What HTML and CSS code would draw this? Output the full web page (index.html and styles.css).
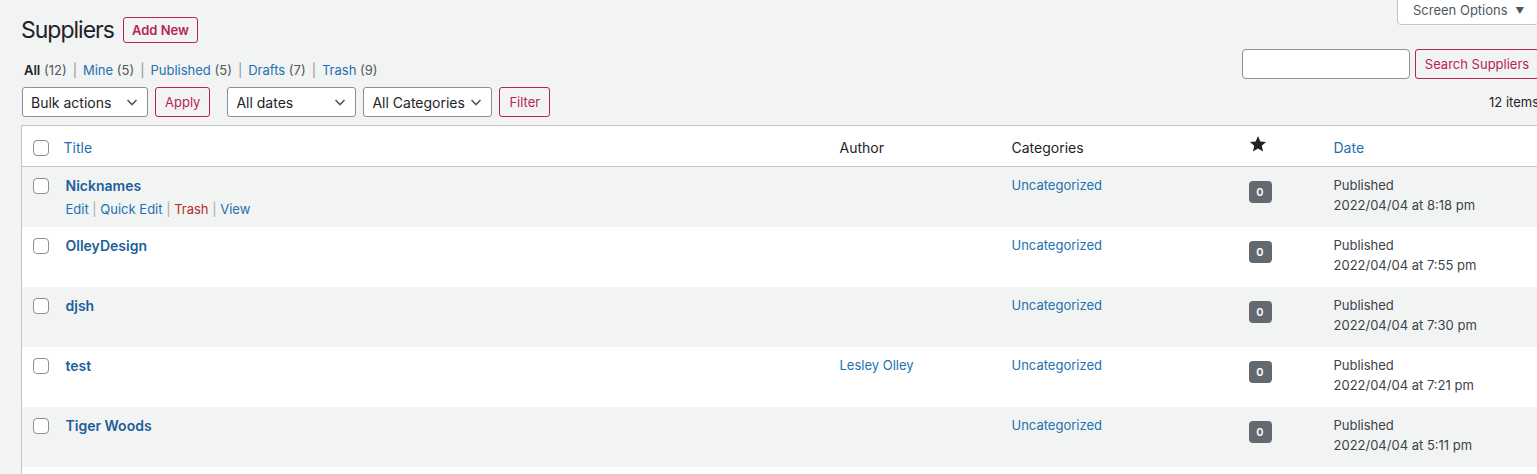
FILE: index.html
```html
<!DOCTYPE html>
<html lang="en">
<head>
  <meta charset="UTF-8">
  <title>Suppliers</title>
  <meta name="viewport" content="width=device-width,initial-scale=1">
  <link rel="stylesheet" href="styles.css">
</head>
<body>
<div class="wrap">

  <div class="head-row">
    <div class="head-title">
      <h1>Suppliers</h1>
      <a class="btn btn-small" href="#">Add New</a>
    </div>
    <button class="screen-options">Screen Options <span class="caret">&#9660;</span></button>
  </div>

  <div class="views-row">
    <ul class="subsubsub">
      <li><b>All</b> <span class="count">(12)</span></li>
      <li><a href="#">Mine</a> <span class="count">(5)</span></li>
      <li><a href="#">Published</a> <span class="count">(5)</span></li>
      <li><a href="#">Drafts</a> <span class="count">(7)</span></li>
      <li><a href="#">Trash</a> <span class="count">(9)</span></li>
    </ul>
    <div class="search-box">
      <input type="search" class="search-input">
      <button class="btn">Search Suppliers</button>
    </div>
  </div>

  <div class="tablenav">
    <div class="actions">
      <span class="select w-bulk">
        <select><option>Bulk actions</option></select>
        <svg viewBox="0 0 16 16"><path d="M3.5 6l4.5 4.5L12.5 6"/></svg>
      </span>
      <button class="btn">Apply</button>
    </div>
    <div class="actions">
      <span class="select w-filter">
        <select><option>All dates</option></select>
        <svg viewBox="0 0 16 16"><path d="M3.5 6l4.5 4.5L12.5 6"/></svg>
      </span>
      <span class="select w-filter">
        <select><option>All Categories</option></select>
        <svg viewBox="0 0 16 16"><path d="M3.5 6l4.5 4.5L12.5 6"/></svg>
      </span>
      <button class="btn">Filter</button>
    </div>
    <span class="displaying-num">12 items</span>
  </div>

  <table class="list-table">
    <colgroup>
      <col class="c-check"><col><col class="c-author"><col class="c-cats"><col class="c-star"><col class="c-date">
    </colgroup>
    <thead>
      <tr>
        <th class="check-column"><input type="checkbox"></th>
        <th><a href="#">Title</a></th>
        <th>Author</th>
        <th>Categories</th>
        <th class="star-col">
          <svg class="star" viewBox="0 0 20 20"><path d="M10 1.2l2.6 5.9 6.4.6-4.8 4.3 1.4 6.3L10 15l-5.6 3.3 1.4-6.3L1 7.7l6.4-.6z"/></svg>
        </th>
        <th><a href="#">Date</a></th>
      </tr>
    </thead>
    <tbody>
      <tr>
        <td class="check-column"><input type="checkbox"></td>
        <td class="title-col">
          <a class="row-title" href="#">Nicknames</a>
          <div class="row-actions show">
            <a href="#">Edit</a> | <a href="#">Quick Edit</a> | <a class="trash" href="#">Trash</a> | <a href="#">View</a>
          </div>
        </td>
        <td></td>
        <td><a href="#">Uncategorized</a></td>
        <td class="star-col"><span class="count-badge">0</span></td>
        <td class="date">Published<br>2022/04/04 at 8:18 pm</td>
      </tr>
      <tr>
        <td class="check-column"><input type="checkbox"></td>
        <td class="title-col">
          <a class="row-title" href="#">OlleyDesign</a>
          <div class="row-actions">
            <a href="#">Edit</a> | <a href="#">Quick Edit</a> | <a class="trash" href="#">Trash</a> | <a href="#">View</a>
          </div>
        </td>
        <td></td>
        <td><a href="#">Uncategorized</a></td>
        <td class="star-col"><span class="count-badge">0</span></td>
        <td class="date">Published<br>2022/04/04 at 7:55 pm</td>
      </tr>
      <tr>
        <td class="check-column"><input type="checkbox"></td>
        <td class="title-col">
          <a class="row-title" href="#">djsh</a>
          <div class="row-actions">
            <a href="#">Edit</a> | <a href="#">Quick Edit</a> | <a class="trash" href="#">Trash</a> | <a href="#">View</a>
          </div>
        </td>
        <td></td>
        <td><a href="#">Uncategorized</a></td>
        <td class="star-col"><span class="count-badge">0</span></td>
        <td class="date">Published<br>2022/04/04 at 7:30 pm</td>
      </tr>
      <tr>
        <td class="check-column"><input type="checkbox"></td>
        <td class="title-col">
          <a class="row-title" href="#">test</a>
          <div class="row-actions">
            <a href="#">Edit</a> | <a href="#">Quick Edit</a> | <a class="trash" href="#">Trash</a> | <a href="#">View</a>
          </div>
        </td>
        <td><a href="#">Lesley Olley</a></td>
        <td><a href="#">Uncategorized</a></td>
        <td class="star-col"><span class="count-badge">0</span></td>
        <td class="date">Published<br>2022/04/04 at 7:21 pm</td>
      </tr>
      <tr>
        <td class="check-column"><input type="checkbox"></td>
        <td class="title-col">
          <a class="row-title" href="#">Tiger Woods</a>
          <div class="row-actions">
            <a href="#">Edit</a> | <a href="#">Quick Edit</a> | <a class="trash" href="#">Trash</a> | <a href="#">View</a>
          </div>
        </td>
        <td></td>
        <td><a href="#">Uncategorized</a></td>
        <td class="star-col"><span class="count-badge">0</span></td>
        <td class="date">Published<br>2022/04/04 at 5:11 pm</td>
      </tr>
      <tr class="empty-row">
        <td colspan="6"></td>
      </tr>
    </tbody>
  </table>

</div>
</body>
</html>
```

FILE: styles.css
```css
:root {
  --bg: #f2f3f3; --stripe: #f2f3f3;
  --text: #1d2327; --muted: #50575e; --date: #3c434a;
  --link: #2271b1; --title: #1d5f9a;
  --accent: #b8245a; --border: #c3c4c7; --field: #8c8f94;
}
html, body {margin:0; height:100%; overflow:hidden;}
body {
  background:var(--bg); color:var(--text);
  font-family:Inter, "Noto Sans", sans-serif; font-size:13px;
}
a {color:var(--link); text-decoration:none;}
.wrap {width:1518px; padding-left:21px;}

/* heading + screen options tab */
.head-row {display:flex; justify-content:space-between; align-items:flex-start; margin-bottom:4px;}
.head-title {display:flex; align-items:center; gap:9px; padding-top:15px;}
h1 {margin:0; font-size:23px; font-weight:400; line-height:30px; letter-spacing:-1px;}
.screen-options {
  width:142px; height:26px; margin-top:-1px;
  background:#fff; border:1px solid var(--border); border-radius:0 0 4px 4px;
  font:inherit; font-size:13px; color:var(--muted);
  padding:0 0 4px 15px; text-align:left;
}
.caret {font-size:9px; margin-left:4px; vertical-align:1px;}

.btn {
  display:inline-flex; align-items:center; box-sizing:border-box;
  height:30px; padding:0 10px;
  border:1px solid var(--accent); border-radius:3px;
  background:transparent; color:var(--accent);
  font:inherit; font-size:13px;
}
.btn-small {height:26px; padding:0 8px; font-weight:600;}

/* views + search */
.views-row {display:flex; justify-content:space-between; align-items:flex-end;}
.subsubsub {display:flex; list-style:none; margin:0 0 -1px 3px; padding:0; line-height:20px; color:var(--muted);}
.subsubsub li + li::before {content:"|"; color:#8c8f94; padding:0 6px;}
.subsubsub b {color:var(--text); font-weight:600;}
.search-box {display:flex; gap:5px;}
.search-input {
  width:168px; height:30px; box-sizing:border-box;
  border:1px solid var(--field); border-radius:4px; background:#fff;
}
.search-box .btn {width:124px; justify-content:center; padding:0;}

/* bulk actions / filters */
.tablenav {display:flex; align-items:center; margin:8px 0 8px; height:30px;}
.actions {display:flex; gap:7px; margin-right:17px;}
.actions:first-child {margin-left:1px;}
.select {position:relative; display:inline-block;}
.select select {
  appearance:none; -webkit-appearance:none;
  height:30px; width:100%; box-sizing:border-box;
  padding:0 24px 0 8px;
  border:1px solid var(--field); border-radius:3px; background:#fff;
  font:inherit; font-size:14px; color:var(--text);
}
.select svg {
  position:absolute; right:8px; top:7px; width:16px; height:16px;
  fill:none; stroke:#50575e; stroke-width:1.6; pointer-events:none;
}
.w-bulk {width:126px;}
.w-filter {width:129px;}
.actions .btn {padding:0 9px;}
.displaying-num {margin-left:auto; font-size:13px; color:var(--text);}

/* list table */
.list-table {
  width:1519px; table-layout:fixed; border-collapse:collapse;
  background:#fff; border:1px solid var(--border);
}
.c-check {width:32px;}
.c-author {width:172px;}
.c-cats {width:237px;}
.c-star {width:85px;}
.c-date {width:216px;}
th, td {text-align:left; vertical-align:top;}
thead th {
  padding:11px 10px 8px; line-height:21px; height:21px;
  font-size:14px; font-weight:400; color:var(--text);
  border-bottom:1px solid var(--border);
}
thead a {color:var(--link);}
tbody tr:nth-child(odd) {background:var(--stripe);}
tbody td {padding:9px 10px 8px; line-height:19.5px; font-size:13px;}
.empty-row td {height:40px;}

input[type=checkbox] {
  appearance:none; -webkit-appearance:none;
  width:16px; height:16px; margin:0 0 0 8px;
  border:1px solid var(--field); border-radius:4px; background:#fff;
  display:block;
}
.check-column {padding:0 0 0 3px !important;}
thead .check-column input {margin-top:14px;}
tbody .check-column input {margin-top:11px;}

.title-col {padding-left:12px !important;}
.row-title {font-size:14px; font-weight:600; line-height:20px; color:var(--title); display:block;}
.row-actions {padding-top:3px; line-height:20px; color:#a7aaad; visibility:hidden;}
.row-actions.show {visibility:visible;}
.row-actions .trash {color:#b32d2e;}

.star {width:18px; height:18px; fill:var(--text); display:block; margin:-2px 0 0 0;}
.count-badge {
  display:inline-block; margin-top:5px;
  width:23px; height:22px; line-height:22px; text-align:center;
  background:#646970; color:#fff; border-radius:4px;
  font-size:11px; font-weight:600;
}
.date {color:var(--date);}
```
